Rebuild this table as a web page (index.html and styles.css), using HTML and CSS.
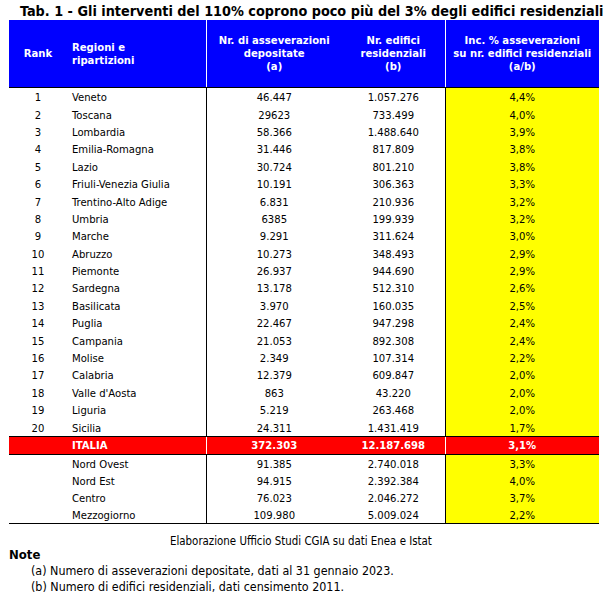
FILE: index.html
```html
<!DOCTYPE html>
<html lang="it">
<head>
<meta charset="utf-8">
<link rel="stylesheet" href="styles.css">
</head>
<body>
<div class="page">
  <h1 class="title">Tab. 1 - Gli interventi del 110% coprono poco più del 3% degli edifici residenziali</h1>
  <table class="tab">
    <colgroup>
      <col class="c-rank"><col class="c-reg"><col class="c-a"><col class="c-b"><col class="c-pct">
    </colgroup>
    <thead>
      <tr>
        <th class="rank">Rank</th>
        <th class="reg">Regioni e<br>ripartizioni</th>
        <th class="sepl">Nr. di asseverazioni<br>depositate<br>(a)</th>
        <th>Nr. edifici<br>residenziali<br>(b)</th>
        <th class="sepl">Inc. % asseverazioni<br>su nr. edifici residenziali<br>(a/b)</th>
      </tr>
    </thead>
    <tbody class="regions">
      <tr><td class="rank">1</td><td class="reg">Veneto</td><td class="num sep">46.447</td><td class="num">1.057.276</td><td class="pct">4,4%</td></tr>
      <tr><td class="rank">2</td><td class="reg">Toscana</td><td class="num sep">29623</td><td class="num">733.499</td><td class="pct">4,0%</td></tr>
      <tr><td class="rank">3</td><td class="reg">Lombardia</td><td class="num sep">58.366</td><td class="num">1.488.640</td><td class="pct">3,9%</td></tr>
      <tr><td class="rank">4</td><td class="reg">Emilia-Romagna</td><td class="num sep">31.446</td><td class="num">817.809</td><td class="pct">3,8%</td></tr>
      <tr><td class="rank">5</td><td class="reg">Lazio</td><td class="num sep">30.724</td><td class="num">801.210</td><td class="pct">3,8%</td></tr>
      <tr><td class="rank">6</td><td class="reg">Friuli-Venezia Giulia</td><td class="num sep">10.191</td><td class="num">306.363</td><td class="pct">3,3%</td></tr>
      <tr><td class="rank">7</td><td class="reg">Trentino-Alto Adige</td><td class="num sep">6.831</td><td class="num">210.936</td><td class="pct">3,2%</td></tr>
      <tr><td class="rank">8</td><td class="reg">Umbria</td><td class="num sep">6385</td><td class="num">199.939</td><td class="pct">3,2%</td></tr>
      <tr><td class="rank">9</td><td class="reg">Marche</td><td class="num sep">9.291</td><td class="num">311.624</td><td class="pct">3,0%</td></tr>
      <tr><td class="rank">10</td><td class="reg">Abruzzo</td><td class="num sep">10.273</td><td class="num">348.493</td><td class="pct">2,9%</td></tr>
      <tr><td class="rank">11</td><td class="reg">Piemonte</td><td class="num sep">26.937</td><td class="num">944.690</td><td class="pct">2,9%</td></tr>
      <tr><td class="rank">12</td><td class="reg">Sardegna</td><td class="num sep">13.178</td><td class="num">512.310</td><td class="pct">2,6%</td></tr>
      <tr><td class="rank">13</td><td class="reg">Basilicata</td><td class="num sep">3.970</td><td class="num">160.035</td><td class="pct">2,5%</td></tr>
      <tr><td class="rank">14</td><td class="reg">Puglia</td><td class="num sep">22.467</td><td class="num">947.298</td><td class="pct">2,4%</td></tr>
      <tr><td class="rank">15</td><td class="reg">Campania</td><td class="num sep">21.053</td><td class="num">892.308</td><td class="pct">2,4%</td></tr>
      <tr><td class="rank">16</td><td class="reg">Molise</td><td class="num sep">2.349</td><td class="num">107.314</td><td class="pct">2,2%</td></tr>
      <tr><td class="rank">17</td><td class="reg">Calabria</td><td class="num sep">12.379</td><td class="num">609.847</td><td class="pct">2,0%</td></tr>
      <tr><td class="rank">18</td><td class="reg">Valle d'Aosta</td><td class="num sep">863</td><td class="num">43.220</td><td class="pct">2,0%</td></tr>
      <tr><td class="rank">19</td><td class="reg">Liguria</td><td class="num sep">5.219</td><td class="num">263.468</td><td class="pct">2,0%</td></tr>
      <tr><td class="rank">20</td><td class="reg">Sicilia</td><td class="num sep">24.311</td><td class="num">1.431.419</td><td class="pct">1,7%</td></tr>
    </tbody>
    <tbody class="total">
      <tr><td class="rank"></td><td class="reg">ITALIA</td><td class="num sepw">372.303</td><td class="num">12.187.698</td><td class="pct sepw">3,1%</td></tr>
    </tbody>
    <tbody class="areas">
      <tr><td class="rank"></td><td class="reg">Nord Ovest</td><td class="num sep">91.385</td><td class="num">2.740.018</td><td class="pct">3,3%</td></tr>
      <tr><td class="rank"></td><td class="reg">Nord Est</td><td class="num sep">94.915</td><td class="num">2.392.384</td><td class="pct">4,0%</td></tr>
      <tr><td class="rank"></td><td class="reg">Centro</td><td class="num sep">76.023</td><td class="num">2.046.272</td><td class="pct">3,7%</td></tr>
      <tr><td class="rank"></td><td class="reg">Mezzogiorno</td><td class="num sep">109.980</td><td class="num">5.009.024</td><td class="pct">2,2%</td></tr>
    </tbody>
  </table>
  <p class="source">Elaborazione Ufficio Studi CGIA su dati Enea e Istat</p>
  <h2 class="note-title">Note</h2>
  <ul class="notes">
    <li>(a) Numero di asseverazioni depositate, dati al 31 gennaio 2023.</li>
    <li>(b) Numero di edifici residenziali, dati censimento 2011.</li>
  </ul>
</div>
</body>
</html>
```

FILE: styles.css
```css
html, body {
  margin: 0;
  padding: 0;
  background: #ffffff;
}

.page {
  font-family: "DejaVu Sans Condensed", "DejaVu Sans", sans-serif;
  font-stretch: condensed;
  color: #000000;
  padding-top: 2px;
}

.title {
  margin: 0 0 0 20px;
  font-size: 14.3px;
  line-height: 18px;
  font-weight: bold;
  white-space: nowrap;
}

.tab {
  margin-left: 9px;
  width: 590px;
  border-collapse: collapse;
  table-layout: fixed;
  font-size: 11.2px;
}

.c-rank { width: 58px; }
.c-reg { width: 139px; }
.c-a { width: 136px; }
.c-b { width: 103px; }
.c-pct { width: 154px; }

.tab th, .tab td {
  padding: 0;
  white-space: nowrap;
}

.tab thead th {
  background: #0000ff;
  color: #ffffff;
  font-weight: bold;
  height: 67px;
  line-height: 13px;
  text-align: center;
  vertical-align: middle;
  border-bottom: 1px solid #000000;
}

.tab thead th.reg {
  text-align: left;
  padding-left: 5px;
}

.tab thead th.sepl {
  border-left: 1px solid #ffffff;
}

.tab td {
  height: 15.4px;
  padding-top: 2px;
  line-height: 13px;
  vertical-align: middle;
}

.tab td.rank { text-align: center; }
.tab td.reg { padding-left: 5px; }
.tab td.num { text-align: center; }
.tab td.sep { border-left: 1px solid #000000; }
.tab td.pct {
  text-align: center;
  background: #ffff00;
  border-left: 1px solid #000000;
}

.tab .total td {
  background: #ff0000;
  color: #ffffff;
  font-weight: bold;
  height: 16px;
  padding-top: 1px;
  border-top: 1px solid #000000;
  border-bottom: 1px solid #000000;
}

.tab .total td.pct { background: #ff0000; }
.tab .total td.sepw { border-left: 1px solid #ffffff; }

.tab .areas td { height: 15px; padding-top: 2px; }
.areas tr:last-child td { border-bottom: 1px solid #000000; }

.source {
  margin: 11px 0 0 170px;
  font-size: 11.4px;
  line-height: 13px;
}

.note-title {
  margin: -1px 0 0 9px;
  font-size: 13px;
  line-height: 15px;
  font-weight: bold;
}

.notes {
  list-style: none;
  margin: 1px 0 0 31px;
  padding: 0;
  font-size: 12.4px;
  line-height: 16px;
}
```
